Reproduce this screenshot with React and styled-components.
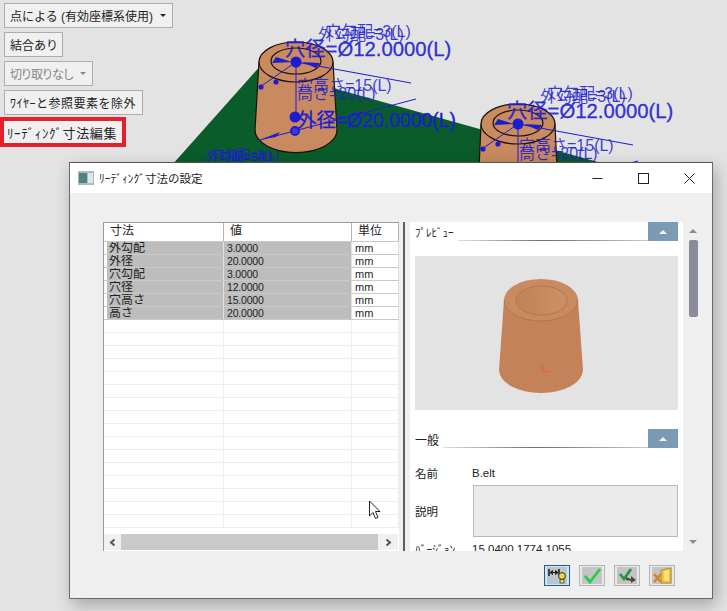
import React from 'react';
import styled, { createGlobalStyle } from 'styled-components';

const Global = createGlobalStyle`
  html, body { margin: 0; padding: 0; background: #e3e3e3; }
  body { font-family: "Liberation Sans", "Noto Sans CJK JP", sans-serif; color: #222; }
`;

const Desktop = styled.div`
  position: relative; width: 727px; height: 611px; overflow: hidden; background: #e3e3e3;
`;
const Scene = styled.svg`
  position: absolute; left: 0; top: 0;
  font-family: "Liberation Sans", "Noto Sans CJK JP", sans-serif;
`;
const Toolbar = styled.div`
  position: relative; display: flex; flex-direction: column; align-items: flex-start;
  gap: 4px; padding: 3px 4px;
`;
const ToolButton = styled.div`
  box-sizing: border-box; width: ${p => p.$w}px; height: 25px; display: flex; align-items: center; gap: 7px;
  padding: 0 0 0 5px; background: #f0f0f0; border: 1px solid #adadad;
  font-size: 12px; white-space: nowrap; letter-spacing: ${p => p.$track || 0}px;
  color: ${p => (p.$disabled ? '#858585' : '#222')};
  &::after {
    content: ''; display: ${p => (p.$menu ? 'block' : 'none')};
    border: 3px solid transparent; border-top: 3px solid currentColor; border-bottom: 0;
  }
`;
const Highlighted = styled(ToolButton)`
  margin-top: 2px; height: 22px; padding: 0 0 0 3px; border: 0; font-size: 13px;
  outline: 4px solid #e3202c;
`;

const Dialog = styled.div`
  position: absolute; left: 69px; top: 162px; box-sizing: border-box;
  width: 644px; height: 437px; background: #efefef; border: 1px solid #6a6a6a; border-top-color: #555;
  box-shadow: 3px 6px 16px rgba(0, 0, 0, 0.28); display: flex; flex-direction: column;
`;
const TitleBar = styled.div`
  height: 30px; background: #fff; display: flex; align-items: center; padding-left: 8px;
  font-size: 11.5px; flex: none;
`;
const Title = styled.span`
  flex: 1; margin-left: 5px;
`;
const WinButton = styled.div`
  width: 46px; height: 30px; display: flex; align-items: center; justify-content: center;
`;
const Body = styled.div`
  flex: 1; display: flex; padding: 29px 0 0 33px; min-height: 0;
`;
const TableWrap = styled.div`
  width: 296px; height: 329px; background: #fff; border-left: 1px solid #9a9a9a;
  box-sizing: border-box; display: flex; flex-direction: column; flex: none;
`;
const Rows = styled.div`
  flex: 1; overflow: hidden; border-top: 1px solid #9a9a9a;
`;
const Row = styled.div`
  display: grid; grid-template-columns: 120px 128px 47px; height: ${p => (p.$head ? 19 : 13)}px;
  box-sizing: border-box; border-bottom: 1px solid ${p => (p.$head || p.$filled ? '#c9c9c9' : '#eeeeee')};
`;
const Cell = styled.div`
  box-sizing: border-box; overflow: hidden; white-space: nowrap; line-height: 12px;
  border-right: 1px solid ${p => (p.$empty ? '#eeeeee' : '#e2e2e2')};
  padding-left: 3px; background: #fff; font-size: 11px; color: #222;
`;
const NameCell = styled(Cell)`
  background: #bdbdbd; font-size: 12px; padding-left: 2px; margin-left: 3px;
`;
const ValueCell = styled(Cell)`
  background: #bdbdbd; font-size: 10.5px; letter-spacing: -0.2px; line-height: 13px;
`;
const HeadCell = styled.div`
  box-sizing: border-box; font-size: 12px; line-height: 17px; padding-left: 6px;
  border-right: 1px solid #b5b5b5; color: #222;
`;
const HScroll = styled.div`
  height: 16px; background: #f0f0f0; display: flex; align-items: center; flex: none;
  margin-bottom: 1px; margin-right: 1px;
`;
const HThumb = styled.div`
  flex: 1; height: 100%; background: #c9c9c9;
`;
const ArrowBox = styled.div`
  width: ${p => p.$w}px; height: 100%; display: flex; align-items: center; justify-content: center;
`;
const Splitter = styled.div`
  width: 2px; height: 329px; background: #5f5f5f; margin: 0 5px 0 4px; flex: none;
`;
const Panel = styled.div`
  width: 273px; height: 329px; overflow: hidden; background: #fff; flex: none; padding: 0 5px;
  box-sizing: border-box;
`;
const SectionHead = styled.div`
  display: flex; align-items: flex-end; height: 19px; margin-top: ${p => p.$top || 0}px;
  font-size: ${p => p.$size || 11}px; color: #222;
`;
const SectionLabel = styled.span`
  line-height: 14px; margin-bottom: ${p => p.$lift || 0}px; white-space: nowrap;
`;
const SectionLine = styled.div`
  flex: 1; height: 1px; background: linear-gradient(90deg, #e0e0e0, #6d6d6d 45%, #c9c9c9);
  margin-left: 4px;
`;
const Collapse = styled.div`
  width: 30px; height: 19px; background: #7a9bb5; display: flex; align-items: center; justify-content: center;
  &::after {
    content: ''; border: 4px solid transparent; border-bottom: 4px solid #f4f4f4; border-top: 0;
  }
`;
const Preview = styled.div`
  width: 263px; height: 154px; background: #e3e3e3; margin-top: 15px;
`;
const Field = styled.div`
  display: grid; grid-template-columns: 57px 206px; align-items: center; font-size: 11.5px;
  margin-top: ${p => p.$top || 0}px; height: ${p => p.$h}px; color: #222; white-space: nowrap;
`;
const Memo = styled.div`
  height: 52px; margin-left: 1px; box-sizing: border-box; background: #ebebeb; border: 1px solid #b9b9b9;
`;
const VScroll = styled.div`
  width: 17px; height: 329px; display: flex; flex-direction: column; align-items: center; flex: none;
  padding-left: 3px; box-sizing: border-box;
`;
const VThumb = styled.div`
  width: 9px; height: 77px; background: #8a8c9c; border-radius: 2px; margin-top: 7px;
`;
const Tri = styled.div`
  border: 4px solid transparent;
  ${p => (p.$down
    ? 'border-top: 4px solid #8a8c9c; border-bottom: 0; margin-top: 223px;'
    : 'border-bottom: 4px solid #8a8c9c; border-top: 0; margin-top: 7px;')}
`;
const Footer = styled.div`
  height: 47px; display: flex; justify-content: flex-end; align-items: flex-start; gap: 9px;
  padding: 14px 37px 0 0; flex: none; box-sizing: border-box;
`;
const IconButton = styled.div`
  box-sizing: border-box; width: 26px; height: 21px; display: flex; align-items: center; justify-content: center;
  border: 1px solid ${p => (p.$active ? '#1f5f8f' : '#b4b4b4')};
  background: ${p => (p.$active ? '#cfe4f5' : '#e8e8e8')};
`;
const Cursor = styled.svg`
  position: absolute; left: 368px; top: 500px;
`;

const dims = [
  ['外勾配', '3.0000'], ['外径', '20.0000'], ['穴勾配', '3.0000'],
  ['穴径', '12.0000'], ['穴高さ', '15.0000'], ['高さ', '20.0000'],
];
const emptyRows = Array.from({ length: 16 });
const BLUE = '#1c1cd2';

// 円すい台 (シーン用)
const Boss = ({ cx, cy, rxTop, rxBot, h }) => (
  <g stroke="#1c1208" strokeWidth="1.2">
    <path
      d={`M${cx - rxTop} ${cy} L${cx - rxBot} ${cy + h} A${rxBot} ${rxBot * 0.55} 0 0 0 ${cx + rxBot} ${cy + h} L${cx + rxTop} ${cy} Z`}
      fill="#c88a5e"
    />
    <ellipse cx={cx} cy={cy} rx={rxTop} ry={20} fill="#c98b5f" />
    <ellipse cx={cx} cy={cy - 1} rx={25} ry={13} fill="#c98b5f" />
  </g>
);

const Notes = ({ x, y, hy }) => (
  <g fill={BLUE} stroke={BLUE}>
    <path d={`M${x} ${y} L${x - 36} ${y + 25} M${x} ${y} L${x + 115} ${y + 21} M${x} ${y} V${y + 55}`} strokeWidth="1" fill="none" />
    <path d={`M${x - 24} ${y + 1} L${x - 4} ${y} L${x - 20} ${y - 5} Z M${x + 24} ${y + 1} L${x + 6} ${y} L${x + 20} ${y + 6} Z`} stroke="none" />
    <circle cx={x} cy={y} r="5.5" stroke="none" />
    <circle cx={x - 35} cy={y + 25} r="2.6" stroke="none" />
    <circle cx={x - 20} cy={y + 20} r="2.6" stroke="none" />
    <g stroke="none">
      <text x={x + 22} y={y - 22} fontSize="16" fillOpacity="0.85">外勾配=3(L)</text>
      <text x={x + 29} y={y - 25} fontSize="16" fillOpacity="0.85">穴勾配=3(L)</text>
      <text x={x + 1} y={y + hy} fontSize="16" fillOpacity="0.85">穴高さ=15(L)</text>
      <text x={x + 1} y={y + hy + 8} fontSize="16" fillOpacity="0.85">高さ=20(L)</text>
    </g>
    <text x={x - 11} y={y - 6} fontSize="20.3" strokeWidth="0.3" fillOpacity="0.9">穴径=Ø12.0000(L)</text>
  </g>
);

const Preview3D = () => (
  <svg width="263" height="154" viewBox="0 0 263 154">
    <defs>
      <linearGradient id="hole" x1="0" y1="0" x2="1" y2="0">
        <stop offset="0" stopColor="#c08358" />
        <stop offset="1" stopColor="#cc9067" />
      </linearGradient>
    </defs>
    <path d="M89 44 L84 114 A42 23 0 0 0 168 114 L163 44 Z" fill="#c3825a" />
    <ellipse cx="126" cy="44" rx="37" ry="21" fill="#c88a60" />
    <ellipse cx="126.5" cy="44.5" rx="25.5" ry="14.5" fill="url(#hole)" stroke="#a8683f" strokeWidth="0.6" />
    <path d="M89 44 A37 21 0 0 0 163 44" fill="none" stroke="#a8683f" strokeWidth="0.6" />
    <path d="M127 109 L128 115 L135 116" fill="none" stroke="#e0654a" strokeWidth="1.5" />
  </svg>
);

const Chevron = ({ right }) => (
  <svg width="9" height="9" viewBox="0 0 9 9">
    <path d={right ? 'M2.5 1.5 L6 4.5 L2.5 7.5' : 'M6.5 1.5 L3 4.5 L6.5 7.5'} fill="none" stroke="#555" strokeWidth="2" />
  </svg>
);

const Check = ({ arrow }) => (
  <svg width="20" height="17" viewBox="0 0 20 17">
    <rect x="0" y="0" width="20" height="17" fill="#c4c4c4" />
    {arrow ? (
      <>
        <path d="M3 7 L7 12 L14 2" fill="none" stroke="#1f9a3c" strokeWidth="2.8" />
        <path d="M9 10 L14 12 V9 L19 13 L14 16 V14 L9 13 Z" fill="#4a4a4a" />
      </>
    ) : (
      <path d="M3 9 L8 15 L18 2" fill="none" stroke="#25cf4a" strokeWidth="2.8" />
    )}
  </svg>
);

export default function App() {
  return (
    <Desktop>
      <Global />
      <Scene width="727" height="611" viewBox="0 0 727 611">
        <polygon points="172,165 262,64 340,90 598,162 598,170 172,170" fill="#0a5c2b" />
        <Boss cx={296} cy={62} rxTop={37} rxBot={41} h={68} />
        <Boss cx={518} cy={124} rxTop={37} rxBot={40} h={68} />
        <Notes x={296} y={62} hy={29} />
        <Notes x={518} y={124} hy={27} />
        <g fill={BLUE} stroke={BLUE}>
          <path d="M260 140 L416 99 M482 202 L638 161" strokeWidth="1" />
          <circle cx="295" cy="117" r="5.5" stroke="none" />
          <circle cx="295" cy="131" r="4" fill="#3a3ad8" strokeWidth="2" />
          <path d="M262 139 L280 132 L276 137 Z" stroke="none" />
          <text x="297" y="127" strokeWidth="0.3" fontSize="19.4">外径=Ø20.0000(L)</text>
          <text x="206" y="161" stroke="none" fontSize="12.5">外勾配=3(L)</text>
          <text x="212" y="159" stroke="none" fontSize="12.5">穴勾配=3(L)</text>
        </g>
      </Scene>

      <Toolbar>
        <ToolButton $w={169} $menu>点による (有効座標系使用)</ToolButton>
        <ToolButton $w={59}>結合あり</ToolButton>
        <ToolButton $w={89} $menu $disabled $track={-1.5}>切り取りなし</ToolButton>
        <ToolButton $w={139} $track={0.5}>ﾜｲﾔｰと参照要素を除外</ToolButton>
        <Highlighted $w={118} $track={0.6}>ﾘｰﾃﾞｨﾝｸﾞ寸法編集</Highlighted>
      </Toolbar>

      <Dialog>
        <TitleBar>
          <svg width="16" height="14" viewBox="0 0 16 14">
            <rect width="16" height="14" fill="#a9bcc4" />
            <rect x="1" y="2" width="8" height="10" fill="#4c8482" />
            <rect x="10" y="2" width="5" height="10" fill="#dfe6ea" />
          </svg>
          <Title>ﾘｰﾃﾞｨﾝｸﾞ寸法の設定</Title>
          <WinButton>
            <svg width="11" height="11" viewBox="0 0 11 11"><path d="M0.5 5.5 H10.5" stroke="#222" /></svg>
          </WinButton>
          <WinButton>
            <svg width="11" height="11" viewBox="0 0 11 11"><rect x="0.5" y="0.5" width="10" height="10" fill="none" stroke="#222" /></svg>
          </WinButton>
          <WinButton>
            <svg width="11" height="11" viewBox="0 0 11 11"><path d="M0.5 0.5 L10.5 10.5 M10.5 0.5 L0.5 10.5" stroke="#222" /></svg>
          </WinButton>
        </TitleBar>

        <Body>
          <TableWrap>
            <Rows>
              <Row $head>
                <HeadCell>寸法</HeadCell>
                <HeadCell>値</HeadCell>
                <HeadCell>単位</HeadCell>
              </Row>
              {dims.map(([name, value]) => (
                <Row key={name} $filled>
                  <NameCell>{name}</NameCell>
                  <ValueCell>{value}</ValueCell>
                  <Cell>mm</Cell>
                </Row>
              ))}
              {emptyRows.map((_, i) => (
                <Row key={i}>
                  <Cell $empty />
                  <Cell $empty />
                  <Cell $empty />
                </Row>
              ))}
            </Rows>
            <HScroll>
              <ArrowBox $w={17}><Chevron /></ArrowBox>
              <HThumb />
              <ArrowBox $w={20}><Chevron right /></ArrowBox>
            </HScroll>
          </TableWrap>
          <Splitter />
          <Panel>
            <SectionHead>
              <SectionLabel $lift={1}>ﾌﾟﾚﾋﾞｭｰ</SectionLabel>
              <SectionLine />
              <Collapse />
            </SectionHead>
            <Preview><Preview3D /></Preview>
            <SectionHead $top={19} $size={12}>
              <SectionLabel>一般</SectionLabel>
              <SectionLine />
              <Collapse />
            </SectionHead>
            <Field $top={14} $h={22}><span>名前</span><span>B.elt</span></Field>
            <Field $h={52} $top={1}><span>説明</span><Memo /></Field>
            <Field $h={22} $top={1}><span>ﾊﾞｰｼﾞｮﾝ</span><span>15.0400.1774.1055</span></Field>
          </Panel>
          <VScroll>
            <Tri />
            <VThumb />
            <Tri $down />
          </VScroll>
        </Body>

        <Footer>
          <IconButton $active>
            <svg width="20" height="17" viewBox="0 0 20 17">
              <rect width="20" height="17" fill="#bdc5cc" />
              <path d="M2 2 V9 M12 2 V9" stroke="#222" strokeWidth="1.6" fill="none" />
              <path d="M3 5.5 H11 M3 5.5 L5.5 3.5 V7.5 Z M11 5.5 L8.5 3.5 V7.5 Z" stroke="#222" strokeWidth="1" fill="#222" />
              <circle cx="15" cy="9" r="3.4" fill="#f2d83a" stroke="#333" />
              <rect x="13" y="12.5" width="4" height="3.5" fill="#f2d83a" stroke="#333" strokeWidth="0.7" />
            </svg>
          </IconButton>
          <IconButton><Check /></IconButton>
          <IconButton><Check arrow /></IconButton>
          <IconButton>
            <svg width="20" height="17" viewBox="0 0 20 17">
              <rect width="20" height="17" fill="#c4c4c4" />
              <path d="M9 3 L19 1 V16 H9 Z" fill="#efc23f" stroke="#a8842a" strokeWidth="0.8" />
              <path d="M12 4 L17 3 V14 H12 Z" fill="#f7e27c" />
              <path d="M2 7 L9 15 M9 7 L2 15" stroke="#d9822b" strokeWidth="2.6" />
            </svg>
          </IconButton>
        </Footer>
      </Dialog>

      <Cursor width="14" height="21" viewBox="0 0 14 21">
        <path d="M1.5 1 V16 L5 12.5 L7.5 18.5 L10 17.5 L7.5 11.5 H12 Z" fill="#fff" stroke="#222" strokeWidth="1" />
      </Cursor>
    </Desktop>
  );
}
